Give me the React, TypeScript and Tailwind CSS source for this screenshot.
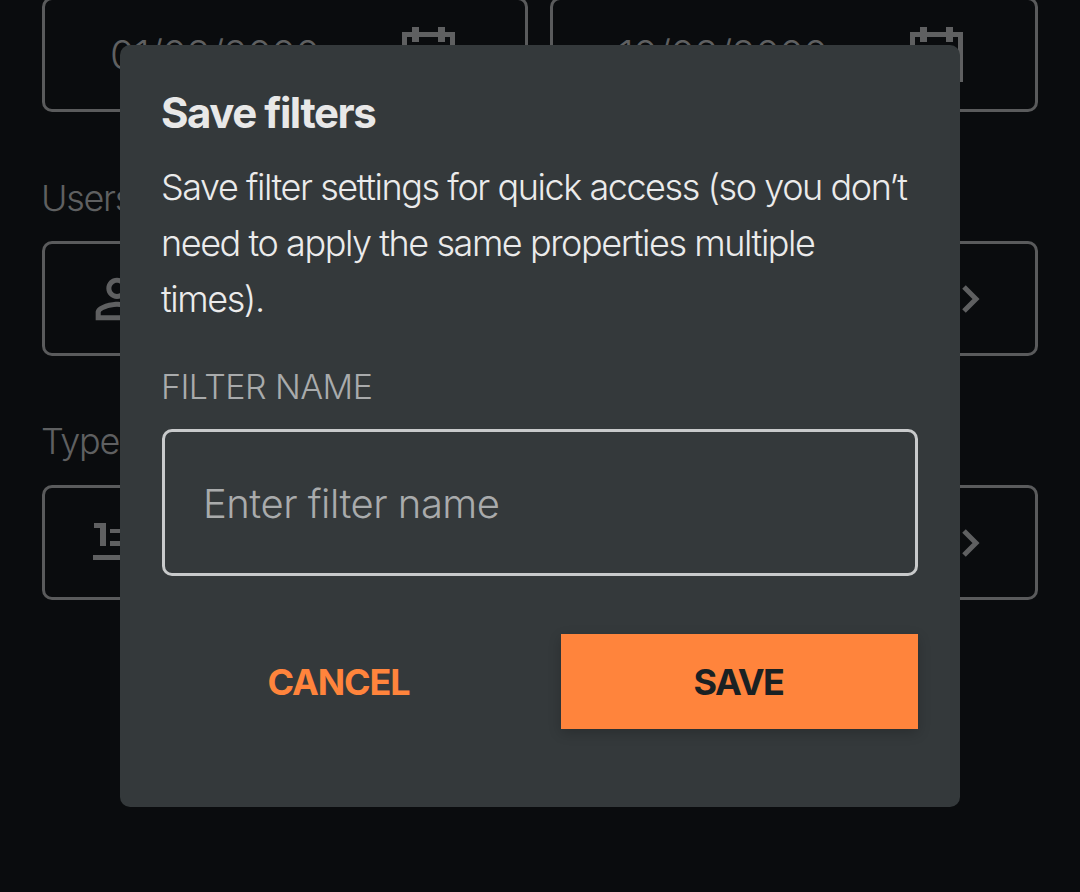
const PERSON =
  "M12 5.9c1.16 0 2.1.94 2.1 2.1s-.94 2.1-2.1 2.1S9.9 9.16 9.9 8s.94-2.1 2.1-2.1m0 9c2.97 0 6.1 1.46 6.1 2.1v1.1H5.9V17c0-.64 3.13-2.1 6.1-2.1M12 4C9.79 4 8 5.79 8 8s1.79 4 4 4 4-1.79 4-4-1.79-4-4-4zm0 9c-2.67 0-8 1.34-8 4v3h16v-3c0-2.66-5.33-4-8-4z";

function Chevron() {
  return (
    <svg viewBox="0 0 18 28" className="h-[28px] w-[18px]" fill="none" stroke="#5f6061" strokeWidth="5">
      <path d="M2 2l12 12L2 26" />
    </svg>
  );
}

function DateField({ value, paddingRight }: { value: string; paddingRight: string }) {
  return (
    <div className={"flex h-[115px] items-center justify-between rounded-[10px] border-[3px] border-[#5a5b5c] pl-[65px] " + paddingRight}>
      <span className="text-[40px] font-light tracking-[-0.7px] text-[#5f6061]">{value}</span>
      <svg viewBox="0 0 53 55" className="h-[55px] w-[53px]" fill="#5f6061">
        <path fillRule="evenodd" d="M10 0h7v5h19V0h7v5h10v50H0V5h10zM5 10v40h43V10h-5v5h-7v-5H17v5h-7v-5z" />
      </svg>
    </div>
  );
}

function SelectField({ icon }: { icon: React.ReactNode }) {
  return (
    <div className="flex h-[115px] items-center justify-between rounded-[10px] border-[3px] border-[#5a5b5c] pl-[40px] pr-[55px]">
      {icon}
      <Chevron />
    </div>
  );
}

export default function App() {
  return (
    <div className="relative h-[892px] overflow-hidden bg-[#0a0c0e] font-['Inter',sans-serif]">
      <div className="mt-[-3px] px-[42px] pt-0">
        <div className="grid grid-cols-[486px_488px] gap-[22px]">
          <DateField value="01/02/2000" paddingRight="pr-[70px]" />
          <DateField value="10/02/2000" paddingRight="pr-[72px]" />
        </div>

        <div className="-ml-px mt-[64px] text-[36px] font-light leading-[44px] tracking-[-1.3px] text-[#5f6061]">Users</div>
        <div className="mt-[21px]">
          <SelectField
            icon={
              <svg viewBox="0 0 24 24" className="h-[64px] w-[64px]" fill="#5f6061">
                <path d={PERSON} />
              </svg>
            }
          />
        </div>

        <div className="-ml-px mt-[63px] text-[36px] font-light leading-[44px] tracking-[-1.3px] text-[#5f6061]">Type</div>
        <div className="mt-[22px]">
          <SelectField
            icon={
              <svg viewBox="0 0 64 40" className="ml-[8px] h-[40px] w-[64px]" fill="#5f6061">
                <path d="M1 0h12v23H7V5H1z" />
                <rect x="17" y="6" width="40" height="4" />
                <rect x="17" y="18" width="40" height="5" />
                <rect x="0" y="32" width="64" height="5" />
              </svg>
            }
          />
        </div>
      </div>

      <div className="absolute left-[120px] top-[45px] h-[762px] w-[840px] rounded-[10px] bg-[#34393b] px-[42px] pt-[42px]">
        <h2 className="-ml-px text-[42px] font-bold leading-[52px] tracking-[-1.45px] text-[#e8e8e8]">Save filters</h2>
        <p className="-ml-px mt-[20px] text-[36px] font-light leading-[56px] tracking-[-1.44px] text-[#ebebeb]">
          Save filter settings for quick access (so you don’t need to apply the same properties multiple times).
        </p>
        <div className="-ml-px mt-[38px] text-[34px] font-light leading-[44px] tracking-[-0.55px] text-[#a9abac]">FILTER NAME</div>
        <div className="mt-[20px] flex h-[147px] items-center rounded-[10px] border-[3px] border-[#c8cacb] px-[38px] pt-[2px]">
          <span className="text-[40px] font-light tracking-[-0.5px] text-[#a9abac]">Enter filter name</span>
        </div>
        <div className="mt-[58px] flex gap-[42px]">
          <button type="button" className="h-[95px] flex-1 pr-[4px] text-[36px] font-bold tracking-[-1.1px] text-[#ff843c]">
            CANCEL
          </button>
          <button
            type="button"
            className="h-[95px] w-[357px] bg-[#ff843c] pr-[2px] text-[36px] font-bold tracking-[-1.4px] text-[#1a2123] shadow-[0_4px_12px_rgba(0,0,0,0.2)]"
          >
            SAVE
          </button>
        </div>
      </div>
    </div>
  );
}
